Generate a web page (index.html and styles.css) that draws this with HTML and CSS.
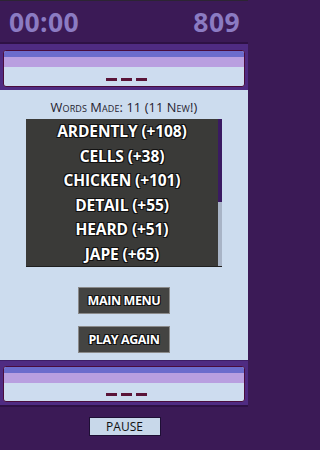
FILE: index.html
```html
<!DOCTYPE html>
<html>
<head>
<meta charset="utf-8">
<link rel="stylesheet" href="styles.css">
</head>
<body>
<div class="app">
  <header class="header">
    <span class="timer">00:00</span>
    <span class="score">809</span>
  </header>
  <div class="band band-top">
    <div class="panel">
      <div class="stripe-blue"></div>
      <div class="stripe-lav"></div>
      <div class="panel-body"><span class="dash"></span><span class="dash"></span><span class="dash"></span></div>
    </div>
  </div>
  <main class="main">
    <div class="label">Words Made: 11 (11 New!)</div>
    <div class="list">
      <ul class="words">
        <li>ARDENTLY (+108)</li>
        <li>CELLS (+38)</li>
        <li>CHICKEN (+101)</li>
        <li>DETAIL (+55)</li>
        <li>HEARD (+51)</li>
        <li>JAPE (+65)</li>
      </ul>
      <div class="scrollbar"><div class="thumb"></div></div>
    </div>
    <button class="btn">MAIN MENU</button>
    <button class="btn btn-second">PLAY AGAIN</button>
  </main>
  <div class="band band-bottom">
    <div class="panel">
      <div class="stripe-blue"></div>
      <div class="stripe-lav"></div>
      <div class="panel-body"><span class="dash"></span><span class="dash"></span><span class="dash"></span></div>
    </div>
  </div>
  <footer class="footer">
    <button class="pause">PAUSE</button>
  </footer>
</div>
</body>
</html>
```
FILE: styles.css
```css
* { box-sizing: border-box; }
html { background: #3b1a56; }
html, body { margin: 0; padding: 0; }
body { width: 248px; height: 450px; overflow: hidden; background: #3b1a56; font-family: "Open Sans", "Liberation Sans", sans-serif; }
.app { display: flex; flex-direction: column; width: 248px; height: 450px; }

.header {
  height: 44px;
  background: #3b1a56;
  border-top: 1px solid #2c2433;
  border-bottom: 2px solid #2e1145;
  display: flex;
  justify-content: space-between;
  align-items: center;
  padding: 0 8px 0 9px;
  color: #8b7bc2;
  font-weight: 700;
  font-size: 26.5px;
  letter-spacing: 0.4px;
}
.header span { line-height: 1; margin-top: 1px; }

.band { background: #4f2b82; padding: 6px 3px 3px; }
.band-bottom { border-top: 1px solid #3d1d66; padding: 5px 3px 3px; border-bottom: 2px solid #2e1145; }
.panel {
  height: 37px;
  border: 1px solid #4a0c3c;
  border-radius: 3px;
  overflow: hidden;
  display: flex;
  flex-direction: column;
  background: #cddcef;
}
.band-bottom .panel { height: 36px; }
.stripe-blue { height: 6px; background: #6c6ccc; flex: none; }
.stripe-lav { height: 10px; background: #b99fe0; flex: none; }
.panel-body { flex: 1; display: flex; justify-content: center; align-items: flex-start; gap: 4px; padding-top: 11px; padding-left: 4px; }
.band-bottom .panel-body { padding-top: 10px; }
.dash { width: 11px; height: 3px; background: #5a1438; }

.main {
  height: 270px;
  background: #ccdcee;
  display: flex;
  flex-direction: column;
  align-items: center;
  padding-top: 11px;
}
.label {
  font-variant: small-caps;
  font-size: 12.8px;
  line-height: 13px;
  color: #25222e;
  letter-spacing: 0.1px;
}
.list {
  margin-top: 5px;
  width: 196px;
  height: 148px;
  display: flex;
  background: #3a3a38;
  border-bottom: 1px solid #1f1f1f;
}
.words {
  list-style: none;
  margin: 0;
  padding: 0;
  flex: 1;
  overflow: hidden;
}
.words li {
  text-align: center;
  color: #fff;
  font-weight: 700;
  font-size: 15.5px;
  line-height: 24.6px;
  letter-spacing: -0.1px;
  text-shadow: 1px 1px 0 #111, -1px -1px 0 #111, 1px -1px 0 #111, -1px 1px 0 #111;
}
.scrollbar { width: 4px; background: #a8b4c6; }
.thumb { height: 83px; background: #3a1a62; }

.btn {
  width: 92px;
  height: 27px;
  margin-top: 20px;
  background: #444442;
  border: 1px solid #8a8a8a;
  color: #fff;
  font-family: "Open Sans", "Liberation Sans", sans-serif;
  font-weight: 700;
  font-size: 12.5px;
  letter-spacing: -0.4px;
  padding: 0;
  text-shadow: 1px 1px 0 #111, -1px -1px 0 #111, 1px -1px 0 #111, -1px 1px 0 #111;
}
.btn-second { margin-top: 12px; }

.footer {
  flex: 1;
  background: #3b1a56;
  display: flex;
  justify-content: center;
  align-items: flex-start;
  padding-top: 10px;
  padding-left: 1px;
}
.pause {
  width: 72px;
  height: 19px;
  padding: 0;
  background: #c8d8ea;
  border: 1px solid #1e0f35;
  color: #111;
  font-family: "Open Sans", "Liberation Sans", sans-serif;
  font-size: 12px;
  line-height: 17px;
}
```
